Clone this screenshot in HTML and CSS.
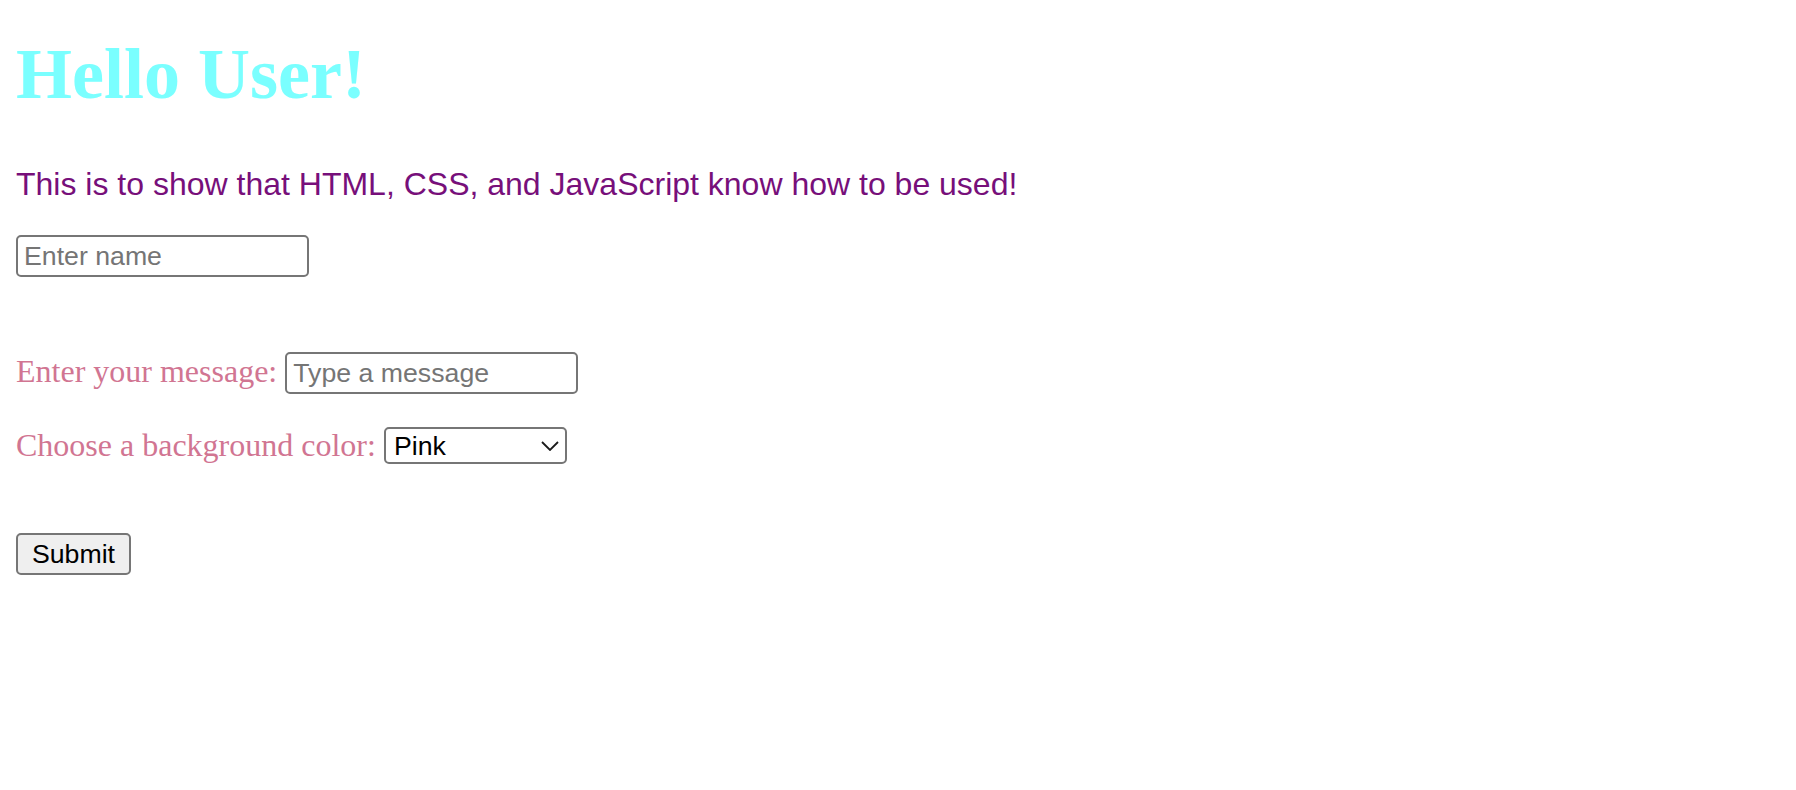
FILE: index.html
```html
<!DOCTYPE html>
<html lang="en">
<head>
<meta charset="utf-8">
<title>Hello User</title>
<link rel="stylesheet" href="styles.css">
</head>
<body>
  <h1 class="title">Hello User!</h1>
  <p class="intro">This is to show that HTML, CSS, and JavaScript know how to be used!</p>
  <input class="field name-field" type="text" placeholder="Enter name">
  <div class="row message-row">
    <label class="label" for="msg">Enter your message:</label>
    <input id="msg" class="field msg-field" type="text" placeholder="Type a message">
  </div>
  <div class="row color-row">
    <label class="label" for="bg">Choose a background color:</label>
    <span class="select-wrap">
      <select id="bg" class="select">
        <option>Pink</option>
        <option>Blue</option>
        <option>Green</option>
      </select>
      <svg class="chevron" width="18" height="10" viewBox="0 0 18 10" aria-hidden="true">
        <path d="M1 1 L9 9 L17 1" fill="none" stroke="#1a1a1a" stroke-width="1.8"/>
      </svg>
    </span>
  </div>
  <button class="submit" type="button">Submit</button>
</body>
</html>
```
FILE: styles.css
```css
html, body {
  background: #ffffff;
}

body {
  margin: 16px;
  display: flex;
  flex-direction: column;
  align-items: flex-start;
}

.title {
  margin: 17px 0 0;
  font-family: "Liberation Serif", "Times New Roman", serif;
  font-weight: bold;
  font-size: 72px;
  line-height: normal;
  color: #7affff;
}

.intro {
  margin: 50px 0 0;
  font-family: "Liberation Sans", Arial, sans-serif;
  font-size: 32px;
  line-height: normal;
  color: #770f7a;
}

.field {
  box-sizing: border-box;
  width: 293px;
  height: 42px;
  padding: 0 6px;
  border: 2px solid #767676;
  border-radius: 5px;
  background: #ffffff;
  font-family: "Liberation Sans", Arial, sans-serif;
  font-size: 26.7px;
  color: #000000;
  outline: none;
}

.field::placeholder {
  color: #757575;
  opacity: 1;
}

.name-field {
  margin-top: 32px;
}

.row {
  display: flex;
  align-items: baseline;
  gap: 8px;
}

.message-row {
  margin-top: 75px;
}

.color-row {
  margin-top: 33px;
}

.label {
  font-family: "Liberation Serif", "Times New Roman", serif;
  font-size: 32px;
  line-height: normal;
  color: #d17592;
}

.select-wrap {
  position: relative;
  display: inline-flex;
  align-self: center;
  margin-top: 0;
}

.select {
  appearance: none;
  -webkit-appearance: none;
  box-sizing: border-box;
  width: 183px;
  height: 37px;
  padding: 0 30px 0 8px;
  border: 2px solid #767676;
  border-radius: 5px;
  background: #ffffff;
  font-family: "Liberation Sans", Arial, sans-serif;
  font-size: 26.7px;
  color: #000000;
  outline: none;
}

.chevron {
  position: absolute;
  right: 8px;
  top: 14px;
  pointer-events: none;
}

.submit {
  box-sizing: border-box;
  margin-top: 69px;
  width: 115px;
  height: 42px;
  padding: 0;
  border: 2px solid #767676;
  border-radius: 5px;
  background: #efefef;
  font-family: "Liberation Sans", Arial, sans-serif;
  font-size: 26.7px;
  color: #000000;
}
```
